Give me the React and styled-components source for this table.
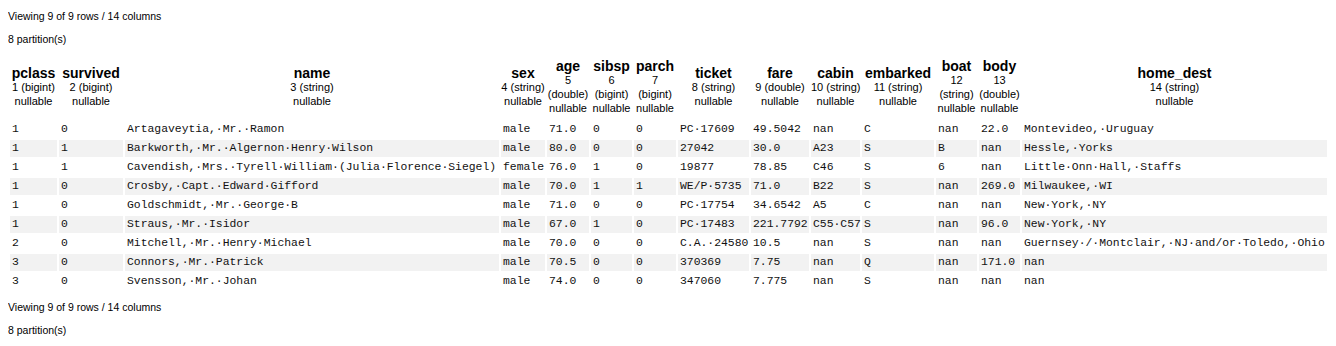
import React from 'react'
import styled, { createGlobalStyle } from 'styled-components'

const GlobalStyle = createGlobalStyle`
  body {
    margin: 8px;
    background: #fff;
    color: #000;
    font-family: "Liberation Sans", Arial, sans-serif;
  }
`

const columns = [
  { name: 'pclass', width: 47, sub: ['1 (bigint)', 'nullable'] },
  { name: 'survived', width: 64, sub: ['2 (bigint)', 'nullable'] },
  { name: 'name', width: 374, sub: ['3 (string)', 'nullable'] },
  { name: 'sex', width: 44, sub: ['4 (string)', 'nullable'] },
  { name: 'age', width: 42, sub: ['5', '(double)', 'nullable'] },
  { name: 'sibsp', width: 41, sub: ['6', '(bigint)', 'nullable'] },
  { name: 'parch', width: 42, sub: ['7', '(bigint)', 'nullable'] },
  { name: 'ticket', width: 71, sub: ['8 (string)', 'nullable'] },
  { name: 'fare', width: 58, sub: ['9 (double)', 'nullable'] },
  { name: 'cabin', width: 49, sub: ['10 (string)', 'nullable'] },
  { name: 'embarked', width: 72, sub: ['11 (string)', 'nullable'] },
  { name: 'boat', width: 41, sub: ['12', '(string)', 'nullable'] },
  { name: 'body', width: 41, sub: ['13', '(double)', 'nullable'] },
  { name: 'home_dest', width: 305, sub: ['14 (string)', 'nullable'] },
]

const rows = [
  ['1', '0', 'Artagaveytia, Mr. Ramon', 'male', '71.0', '0', '0', 'PC 17609', '49.5042', 'nan', 'C', 'nan', '22.0', 'Montevideo, Uruguay'],
  ['1', '1', 'Barkworth, Mr. Algernon Henry Wilson', 'male', '80.0', '0', '0', '27042', '30.0', 'A23', 'S', 'B', 'nan', 'Hessle, Yorks'],
  ['1', '1', 'Cavendish, Mrs. Tyrell William (Julia Florence Siegel)', 'female', '76.0', '1', '0', '19877', '78.85', 'C46', 'S', '6', 'nan', 'Little Onn Hall, Staffs'],
  ['1', '0', 'Crosby, Capt. Edward Gifford', 'male', '70.0', '1', '1', 'WE/P 5735', '71.0', 'B22', 'S', 'nan', '269.0', 'Milwaukee, WI'],
  ['1', '0', 'Goldschmidt, Mr. George B', 'male', '71.0', '0', '0', 'PC 17754', '34.6542', 'A5', 'C', 'nan', 'nan', 'New York, NY'],
  ['1', '0', 'Straus, Mr. Isidor', 'male', '67.0', '1', '0', 'PC 17483', '221.7792', 'C55 C57', 'S', 'nan', '96.0', 'New York, NY'],
  ['2', '0', 'Mitchell, Mr. Henry Michael', 'male', '70.0', '0', '0', 'C.A. 24580', '10.5', 'nan', 'S', 'nan', 'nan', 'Guernsey / Montclair, NJ and/or Toledo, Ohio'],
  ['3', '0', 'Connors, Mr. Patrick', 'male', '70.5', '0', '0', '370369', '7.75', 'nan', 'Q', 'nan', '171.0', 'nan'],
  ['3', '0', 'Svensson, Mr. Johan', 'male', '74.0', '0', '0', '347060', '7.775', 'nan', 'S', 'nan', 'nan', 'nan'],
]

// spaces are shown as visible dots, as in the notebook view
const showSpaces = (s) => s.replace(/ /g, '\u00b7')

const Summary = ({ top }) => (
  <SummaryBlock top={top}>
    <InfoLine>Viewing 9 of 9 rows / 14 columns</InfoLine>
    <InfoLine second>8 partition(s)</InfoLine>
  </SummaryBlock>
)

const App = () => (
  <>
    <GlobalStyle />
    <Summary top={0} />
    <Table>
      <colgroup>
        {columns.map((c) => (
          <col key={c.name} style={{ width: c.width }} />
        ))}
      </colgroup>
      <thead>
        <tr>
          {columns.map((c) => (
            <HeadCell key={c.name}>
              <ColName>{c.name}</ColName>
              {c.sub.map((line, i) => (
                <ColMeta key={i}>{line}</ColMeta>
              ))}
            </HeadCell>
          ))}
        </tr>
      </thead>
      <tbody>
        {rows.map((r, i) => (
          <Row key={i} striped={i % 2 === 1}>
            {r.map((v, j) => (
              <Cell key={j}>{showSpaces(v)}</Cell>
            ))}
          </Row>
        ))}
      </tbody>
    </Table>
    <Summary top={7} />
  </>
)

export default App

const SummaryBlock = styled.div`
  margin-top: ${({ top }) => top}px;
`

const InfoLine = styled.div`
  font-size: 10.5px;
  line-height: 16px;
  margin-top: ${({ second }) => (second ? '7px' : '0')};
  color: #000;
`

const Table = styled.table`
  table-layout: fixed;
  width: 1321px;
  border-collapse: separate;
  border-spacing: 2px;
  margin-top: 8px;
`

const HeadCell = styled.th`
  padding: 2px 0 4px;
  vertical-align: middle;
  text-align: center;
  white-space: nowrap;
  font-weight: normal;
`

const ColName = styled.div`
  font-size: 14px;
  font-weight: bold;
  line-height: 14px;
`

const ColMeta = styled.div`
  font-size: 11px;
  line-height: 14px;
`

const Row = styled.tr`
  background: ${({ striped }) => (striped ? '#f2f2f2' : 'transparent')};
`

const Cell = styled.td`
  padding: 0 2px;
  height: 17px;
  font-family: "Liberation Mono", "Courier New", monospace;
  font-size: 11.4px;
  line-height: 17px;
  color: #111;
  white-space: nowrap;
  overflow: visible;
  text-align: left;
  vertical-align: middle;
`
